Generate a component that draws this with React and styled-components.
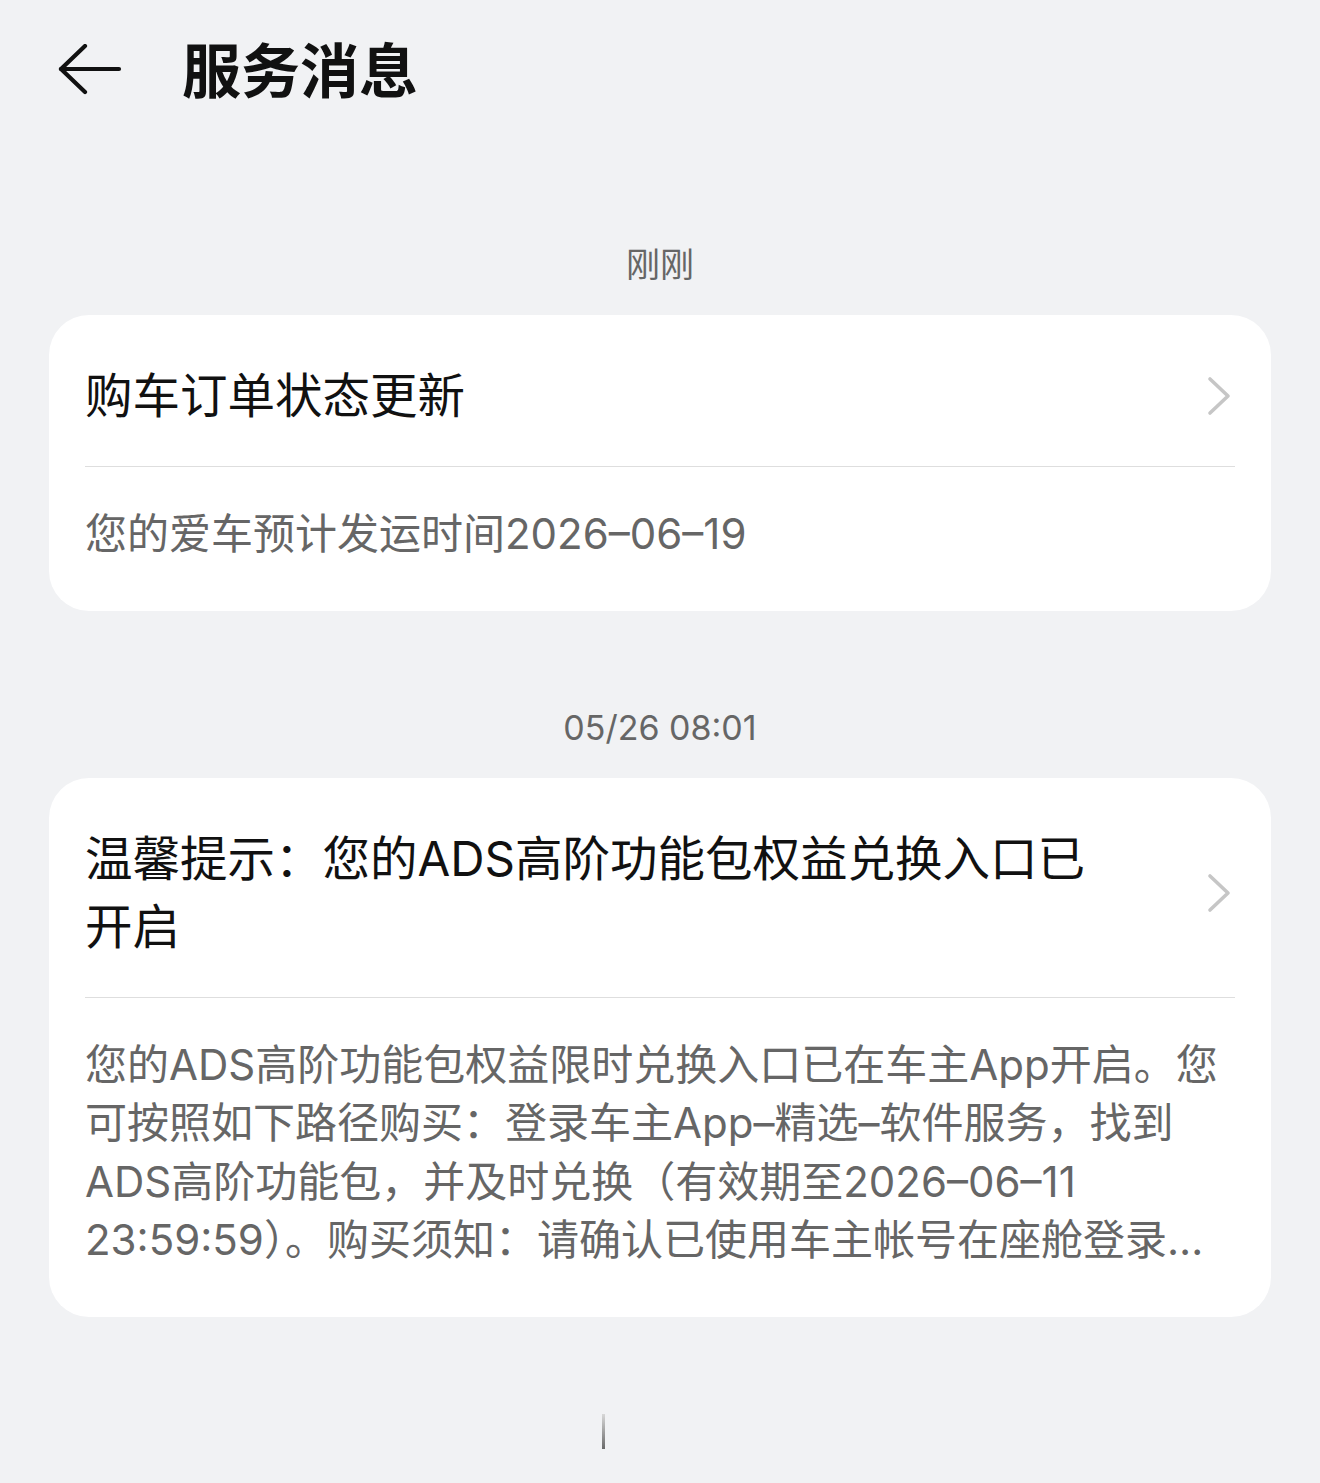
import React from "react";
import styled, { createGlobalStyle } from "styled-components";

const Global = createGlobalStyle`
  html, body { margin: 0; padding: 0; background: #f1f2f4; }
  body { font-family: Inter, "Noto Sans CJK SC", "Noto Sans", sans-serif; -webkit-font-smoothing: antialiased; }
`;

const Page = styled.div`
  min-height: 1483px;
  background: #f1f2f4;
  display: flex;
  flex-direction: column;
`;

const Header = styled.header`
  height: 140px;
  display: flex;
  align-items: center;
  padding-left: 58px;
  gap: 60px;
`;

const BackButton = styled.button`
  border: 0;
  background: none;
  padding: 0;
  width: 64px;
  height: 52px;
  display: flex;
  align-items: center;
  cursor: pointer;
`;

const Title = styled.h1`
  margin: 0;
  font-family: "Noto Sans CJK SC", sans-serif;
  font-size: 59px;
  font-weight: 700;
  color: #111;
  line-height: 1;
  transform: translateY(-3px);
`;

const Section = styled.section`
  margin-top: ${(p) => p.$top}px;
  display: flex;
  flex-direction: column;
  align-items: center;
`;

const TimeLabel = styled.div`
  font-size: 34px;
  line-height: 50px;
  color: #666;
  margin-bottom: 25px;
`;

const Card = styled.article`
  align-self: stretch;
  margin: 0 49px;
  background: #fff;
  border-radius: 40px;
  padding: 0 36px;
`;

const CardHead = styled.div`
  display: flex;
  align-items: center;
  justify-content: space-between;
  padding: 47px 0 36px;
  border-bottom: 1.5px solid #dedede;
`;

const CardTitle = styled.div`
  width: 1030px;
  font-size: 47.5px;
  line-height: 68px;
  color: #111;
`;

const Chevron = styled.svg`
  width: 30px;
  height: 40px;
  flex: none;
`;

const CardBody = styled.div`
  padding: 38px 0 47px;
  font-size: 42px;
  line-height: 58.5px;
  color: #666;
`;

const BodyText = styled.div`
  display: -webkit-box;
  -webkit-box-orient: vertical;
  -webkit-line-clamp: 4;
  overflow: hidden;
`;

const Footer = styled.div`
  margin-top: 97px;
  display: flex;
  justify-content: center;
  padding-right: 114px;
`;

const Caret = styled.div`
  width: 3px;
  height: 35px;
  background: linear-gradient(#d8d8d8, #6a6a6a);
`;

const ArrowLeft = () => (
  <svg width="64" height="52" viewBox="0 0 64 52" fill="none">
    <path d="M3 25 H61" stroke="#111" strokeWidth="4.2" strokeLinecap="round" />
    <path d="M27 2 L3 25 L27 48" stroke="#111" strokeWidth="4.2" strokeLinecap="round" strokeLinejoin="round" />
  </svg>
);

const ChevronIcon = () => (
  <Chevron viewBox="0 0 30 40" fill="none">
    <path d="M5 3 L23 20 L5 37" stroke="#c6c6c6" strokeWidth="3.6" strokeLinecap="round" strokeLinejoin="round" />
  </Chevron>
);

const messages = [
  {
    time: "刚刚",
    top: 100,
    title: "购车订单状态更新",
    body: "您的爱车预计发运时间2026–06–19",
  },
  {
    time: "05/26 08:01",
    top: 92,
    title: "温馨提示：您的ADS高阶功能包权益兑换入口已开启",
    body:
      "您的ADS高阶功能包权益限时兑换入口已在车主App开启。您可按照如下路径购买：登录车主App–精选–软件服务，找到ADS高阶功能包，并及时兑换（有效期至2026–06–11 23:59:59）。购买须知：请确认已使用车主帐号在座舱登录，并确保车辆网络连接正常。",
  },
];

export default function App() {
  return (
    <Page>
      <Global />
      <Header>
        <BackButton aria-label="返回">
          <ArrowLeft />
        </BackButton>
        <Title>服务消息</Title>
      </Header>
      {messages.map((m) => (
        <Section key={m.time} $top={m.top}>
          <TimeLabel>{m.time}</TimeLabel>
          <Card>
            <CardHead>
              <CardTitle>{m.title}</CardTitle>
              <ChevronIcon />
            </CardHead>
            <CardBody>
              <BodyText>{m.body}</BodyText>
            </CardBody>
          </Card>
        </Section>
      ))}
      <Footer>
        <Caret />
      </Footer>
    </Page>
  );
}
